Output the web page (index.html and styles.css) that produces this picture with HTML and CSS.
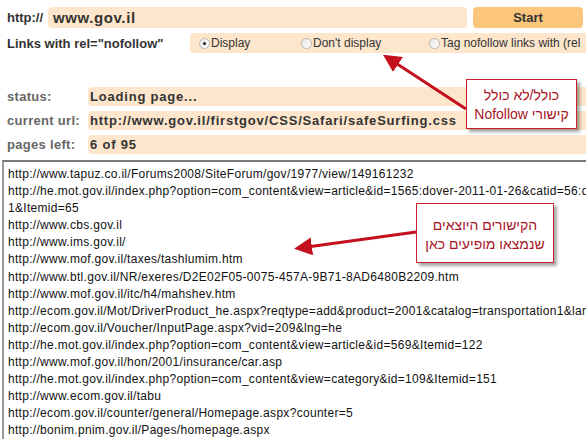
FILE: index.html
```html
<!DOCTYPE html>
<html lang="en">
<head>
    <meta charset="UTF-8">
    <title>Nofollow link scanner</title>
    <link rel="stylesheet" href="styles.css">
</head>
<body>
    <div class="scanner">
        <div class="row url-row">
            <label class="label">http://</label>
            <div class="field url-field">www.gov.il</div>
            <button class="start-button">Start</button>
        </div>

        <div class="row option-row">
            <span class="label option-label">Links with rel="nofollow"</span>
            <div class="options">
                <span class="option option-display"><span class="radio checked"></span>Display</span>
                <span class="option option-hide"><span class="radio"></span>Don't display</span>
                <span class="option"><span class="radio"></span>Tag nofollow links with (rel</span>
            </div>
        </div>

        <div class="info">
            <div class="info-row">
                <span class="info-label">status:</span>
                <span class="info-value">Loading page...</span>
            </div>
            <div class="info-row">
                <span class="info-label">current url:</span>
                <span class="info-value">http://www.gov.il/firstgov/CSS/Safari/safeSurfing.css</span>
            </div>
            <div class="info-row">
                <span class="info-label">pages left:</span>
                <span class="info-value">6 of 95</span>
            </div>
        </div>

        <div class="links">
            <div>http://www.tapuz.co.il/Forums2008/SiteForum/gov/1977/view/149161232</div>
            <div>http://he.mot.gov.il/index.php?option=com_content&amp;view=article&amp;id=1565:dover-2011-01-26&amp;catid=56:dover-201</div>
            <div>1&amp;Itemid=65</div>
            <div>http://www.cbs.gov.il</div>
            <div>http://www.ims.gov.il/</div>
            <div>http://www.mof.gov.il/taxes/tashlumim.htm</div>
            <div>http://www.btl.gov.il/NR/exeres/D2E02F05-0075-457A-9B71-8AD6480B2209.htm</div>
            <div>http://www.mof.gov.il/itc/h4/mahshev.htm</div>
            <div>http://ecom.gov.il/Mot/DriverProduct_he.aspx?reqtype=add&amp;product=2001&amp;catalog=transportation1&amp;language=he</div>
            <div>http://ecom.gov.il/Voucher/InputPage.aspx?vid=209&amp;lng=he</div>
            <div>http://he.mot.gov.il/index.php?option=com_content&amp;view=article&amp;id=569&amp;Itemid=122</div>
            <div>http://www.mof.gov.il/hon/2001/insurance/car.asp</div>
            <div>http://he.mot.gov.il/index.php?option=com_content&amp;view=category&amp;id=109&amp;Itemid=151</div>
            <div>http://www.ecom.gov.il/tabu</div>
            <div>http://ecom.gov.il/counter/general/Homepage.aspx?counter=5</div>
            <div>http://bonim.pnim.gov.il/Pages/homepage.aspx</div>
        </div>
    </div>

    <!-- annotation overlay -->
    <svg class="arrows" width="586" height="439" viewBox="0 0 586 439">
        <defs>
            <marker id="head" markerWidth="6" markerHeight="6" refX="4" refY="3" orient="auto" markerUnits="strokeWidth">
                <path d="M0,0 L6,3 L0,6 Z" fill="#c4101c"/>
            </marker>
        </defs>
        <line x1="466" y1="109" x2="388" y2="58" stroke="#c4101c" stroke-width="3" marker-end="url(#head)"/>
        <line x1="416" y1="232" x2="300" y2="248" stroke="#c4101c" stroke-width="3" marker-end="url(#head)"/>
    </svg>
    <div class="note note-top" dir="rtl">כולל/לא כולל<br>קישורי Nofollow</div>
    <div class="note note-links" dir="rtl">הקישורים היוצאים<br>שנמצאו מופיעים כאן</div>
</body>
</html>
```

FILE: styles.css
```css
* {
    margin: 0;
    padding: 0;
    box-sizing: border-box;
}

body {
    width: 586px;
    height: 439px;
    overflow: hidden;
    background: #fff;
    font-family: "Liberation Sans", Arial, sans-serif;
    color: #333;
    position: relative;
}

.scanner {
    padding-top: 7px;
}

.row {
    display: flex;
    align-items: center;
}

.label {
    font-size: 13px;
    font-weight: bold;
    color: #333;
    padding-left: 7px;
}

.url-row {
    height: 21px;
}

.url-row .label {
    width: 48px;
}

.field {
    background: #fde6cc;
    border-radius: 4px;
    height: 21px;
    line-height: 21px;
}

.url-field {
    width: 419px;
    padding-left: 5px;
    font-size: 15px;
    font-weight: bold;
    letter-spacing: 0.6px;
}

.start-button {
    margin-left: 6px;
    width: 110px;
    height: 21px;
    border: none;
    border-radius: 4px;
    background: #fcc67c;
    font-family: inherit;
    font-size: 13px;
    font-weight: bold;
    color: #333;
}

.option-row {
    margin-top: 5px;
    height: 20px;
}

.option-label {
    width: 190px;
}

.options {
    flex: 1;
    display: flex;
    align-items: center;
    height: 20px;
    background: #fde6cc;
    border-radius: 4px 0 0 4px;
    padding-left: 9px;
    white-space: nowrap;
    overflow: hidden;
    font-size: 12px;
    color: #333;
}

.option {
    display: flex;
    align-items: center;
}

.option-display {
    width: 102px;
}

.option-hide {
    width: 128px;
}

.radio {
    width: 11px;
    height: 11px;
    border-radius: 50%;
    border: 1px solid #b9b9b9;
    background: linear-gradient(135deg, #e6e6e6, #fff);
    margin-right: 1px;
    position: relative;
}

.radio.checked::after {
    content: '';
    position: absolute;
    left: 3px;
    top: 3px;
    width: 3px;
    height: 3px;
    border-radius: 50%;
    background: #222;
}

.info {
    margin-top: 34px;
    display: flex;
    flex-direction: column;
    gap: 5px;
}

.info-row {
    display: flex;
    align-items: center;
    height: 19px;
}

.info-label {
    width: 88px;
    padding-left: 7px;
    font-size: 13px;
    font-weight: bold;
    color: #666;
    letter-spacing: 0.3px;
}

.info-value {
    flex: 1;
    height: 19px;
    line-height: 19px;
    background: #fde6cc;
    border-radius: 4px 0 0 4px;
    padding-left: 2px;
    font-size: 13px;
    font-weight: bold;
    letter-spacing: 0.8px;
    color: #333;
    white-space: nowrap;
    overflow: hidden;
}

.links {
    margin: 6px 0 0 2px;
    height: 290px;
    border-top: 2px solid #7a7a7a;
    border-left: 2px solid #9a9a9a;
    padding: 4px 0 0 4px;
    font-size: 12px;
    line-height: 17.1px;
    letter-spacing: 0.3px;
    color: #111;
    white-space: nowrap;
    overflow: hidden;
}

.arrows {
    position: absolute;
    left: 0;
    top: 0;
    pointer-events: none;
}

.note {
    position: absolute;
    background: #fff;
    border: 1px solid #c8202c;
    box-shadow: 3px 3px 3px rgba(0, 0, 0, 0.35);
    color: #a8141f;
    font-family: "Liberation Sans", Arial, sans-serif;
    font-size: 14px;
    line-height: 19px;
    text-align: center;
}

.note-top {
    left: 466px;
    top: 79px;
    width: 111px;
    height: 50px;
    padding-top: 6px;
}

.note-links {
    left: 416px;
    top: 203px;
    width: 138px;
    height: 60px;
    padding-top: 12px;
}
```
